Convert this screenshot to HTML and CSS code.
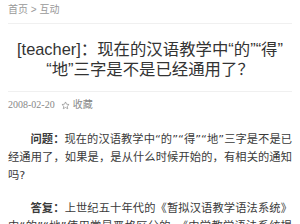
FILE: index.html
```html
<!DOCTYPE html>
<html lang="zh-CN">
<head>
<meta charset="utf-8">
<link rel="stylesheet" href="styles.css">
</head>
<body>
<div class="page">
  <div class="crumb">首页 &gt; 互动</div>
  <h1 class="title">[teacher]：现在的汉语教学中“的”“得”“地”三字是不是已经通用了？</h1>
  <div class="meta">
    <span class="date">2008-02-20</span>
    <span class="fav"><svg class="star" viewBox="0 0 24 24" width="9" height="9"><path d="M12 2.5l2.9 6.1 6.6.8-4.9 4.6 1.3 6.6L12 17.3l-5.9 3.3 1.3-6.6-4.9-4.6 6.6-.8z" fill="none" stroke="#888" stroke-width="1.8" stroke-linejoin="round"/></svg>收藏</span>
  </div>
  <div class="content">
    <p><b>问题：</b>现在的汉语教学中“的”“得”“地”三字是不是已经通用了，如果是，是从什么时候开始的，有相关的通知吗?</p>
    <p><b>答复：</b>上世纪五十年代的《暂拟汉语教学语法系统》中“的”“地”使用常是严格区分的，《中学教学语法系统提要》</p>
  </div>
</div>
</body>
</html>
```
FILE: styles.css
```css
html, body {
  margin: 0;
  padding: 0;
  background: #fff;
}
.page {
  padding: 0 8px;
  font-family: "Liberation Sans", "Noto Sans CJK SC", sans-serif;
  color: #333;
}
.crumb {
  font-size: 10px;
  line-height: 20px;
  color: #999;
  padding-bottom: 3px;
  border-bottom: 1px solid #f0f0f0;
}
.title {
  margin: 15px 0 0;
  padding: 0 0 12px;
  font-size: 16.4px;
  line-height: 20px;
  font-weight: normal;
  text-align: center;
  color: #333;
  border-bottom: 1px solid #f0f0f0;
}
.meta {
  padding-top: 6px;
  font-size: 10px;
  line-height: 14px;
  color: #888;
  display: flex;
  align-items: center;
  gap: 6px;
}
.date {
  font-family: "Liberation Serif", "Noto Sans CJK SC", serif;
}
.fav {
  display: flex;
  align-items: center;
  gap: 3px;
}
.content {
  padding-top: 19px;
  font-family: "DejaVu Sans", "Noto Sans CJK SC", sans-serif;
  font-size: 11.25px;
  line-height: 18px;
  color: #3a3a3a;
}
.content p {
  margin: 0 0 15px;
  text-indent: 2em;
  text-align: justify;
}
.content b {
  font-weight: bold;
}
```
